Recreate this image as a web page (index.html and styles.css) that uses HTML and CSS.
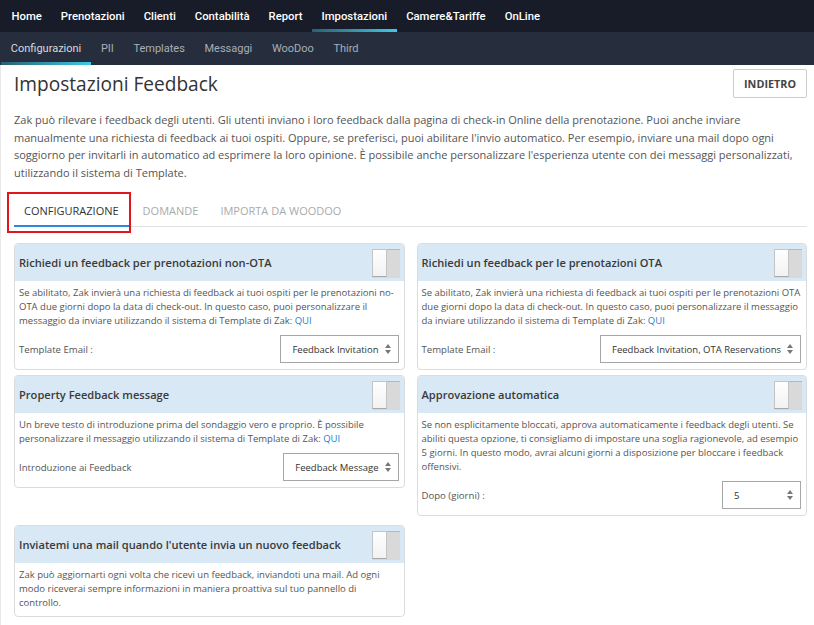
FILE: index.html
```html
<!DOCTYPE html>
<html lang="it">

<head>
  <meta charset="UTF-8" />
  <meta name="viewport" content="width=device-width, initial-scale=1.0" />
  <title>Impostazioni Feedback</title>

  <link rel="stylesheet" href="styles.css">

</head>

<body>

  <!-- Menu principale -->
  <nav class="topnav">
    <a class="topnav-item">Home</a>
    <a class="topnav-item">Prenotazioni</a>
    <a class="topnav-item">Clienti</a>
    <a class="topnav-item">Contabilità</a>
    <a class="topnav-item">Report</a>
    <a class="topnav-item active">Impostazioni</a>
    <a class="topnav-item">Camere&amp;Tariffe</a>
    <a class="topnav-item">OnLine</a>
  </nav>

  <!-- Sotto menu -->
  <nav class="subnav">
    <a class="subnav-item active">Configurazioni</a>
    <a class="subnav-item">PII</a>
    <a class="subnav-item">Templates</a>
    <a class="subnav-item">Messaggi</a>
    <a class="subnav-item">WooDoo</a>
    <a class="subnav-item">Third</a>
  </nav>

  <main class="page">

    <div class="page-header">
      <h1 class="page-title">Impostazioni Feedback</h1>
      <button class="btn-back">INDIETRO</button>
    </div>

    <p class="intro">Zak può rilevare i feedback degli utenti. Gli utenti inviano i loro feedback dalla pagina di check-in Online della prenotazione. Puoi anche inviare manualmente una richiesta di feedback ai tuoi ospiti. Oppure, se preferisci, puoi abilitare l'invio automatico. Per esempio, inviare una mail dopo ogni soggiorno per invitarli in automatico ad esprimere la loro opinione. È possibile anche personalizzare l'esperienza utente con dei messaggi personalizzati, utilizzando il sistema di Template.</p>

    <div class="tabs">
      <div class="tab active">CONFIGURAZIONE<span class="highlight"></span></div>
      <div class="tab">DOMANDE</div>
      <div class="tab">IMPORTA DA WOODOO</div>
    </div>

    <div class="cards">

      <div class="card">
        <div class="card-head">
          <span class="card-title">Richiedi un feedback per prenotazioni non-OTA</span>
          <span class="toggle"><span class="knob"></span></span>
        </div>
        <div class="card-body">
          <p>Se abilitato, Zak invierà una richiesta di feedback ai tuoi ospiti per le prenotazioni no-OTA due giorni dopo la data di check-out. In questo caso, puoi personalizzare il messaggio da inviare utilizzando il sistema di Template di Zak: <a class="link">QUI</a></p>
          <div class="field">
            <span class="field-label">Template Email :</span>
            <div class="select">
              <span>Feedback Invitation</span>
              <svg class="arrows" width="6" height="10" viewBox="0 0 6 10"><path d="M3 0L6 4H0Z M3 10L0 6H6Z" fill="#777"/></svg>
            </div>
          </div>
        </div>
      </div>

      <div class="card">
        <div class="card-head">
          <span class="card-title">Richiedi un feedback per le prenotazioni OTA</span>
          <span class="toggle"><span class="knob"></span></span>
        </div>
        <div class="card-body">
          <p>Se abilitato, Zak invierà una richiesta di feedback ai tuoi ospiti per le prenotazioni OTA due giorni dopo la data di check-out. In questo caso, puoi personalizzare il messaggio da inviare utilizzando il sistema di Template di Zak: <a class="link">QUI</a></p>
          <div class="field">
            <span class="field-label">Template Email :</span>
            <div class="select">
              <span>Feedback Invitation, OTA Reservations</span>
              <svg class="arrows" width="6" height="10" viewBox="0 0 6 10"><path d="M3 0L6 4H0Z M3 10L0 6H6Z" fill="#777"/></svg>
            </div>
          </div>
        </div>
      </div>

      <div class="card">
        <div class="card-head">
          <span class="card-title">Property Feedback message</span>
          <span class="toggle"><span class="knob"></span></span>
        </div>
        <div class="card-body">
          <p>Un breve testo di introduzione prima del sondaggio vero e proprio. È possibile personalizzare il messaggio utilizzando il sistema di Template di Zak: <a class="link">QUI</a></p>
          <div class="field">
            <span class="field-label">Introduzione ai Feedback</span>
            <div class="select">
              <span>Feedback Message</span>
              <svg class="arrows" width="6" height="10" viewBox="0 0 6 10"><path d="M3 0L6 4H0Z M3 10L0 6H6Z" fill="#777"/></svg>
            </div>
          </div>
        </div>
      </div>

      <div class="card">
        <div class="card-head">
          <span class="card-title">Approvazione automatica</span>
          <span class="toggle"><span class="knob"></span></span>
        </div>
        <div class="card-body">
          <p>Se non esplicitamente bloccati, approva automaticamente i feedback degli utenti. Se abiliti questa opzione, ti consigliamo di impostare una soglia ragionevole, ad esempio 5 giorni. In questo modo, avrai alcuni giorni a disposizione per bloccare i feedback offensivi.</p>
          <div class="field">
            <span class="field-label">Dopo (giorni) :</span>
            <div class="select select-small">
              <span>5</span>
              <svg class="arrows" width="6" height="10" viewBox="0 0 6 10"><path d="M3 0L6 4H0Z M3 10L0 6H6Z" fill="#777"/></svg>
            </div>
          </div>
        </div>
      </div>

      <div class="card card-last">
        <div class="card-head">
          <span class="card-title">Inviatemi una mail quando l'utente invia un nuovo feedback</span>
          <span class="toggle"><span class="knob"></span></span>
        </div>
        <div class="card-body">
          <p>Zak può aggiornarti ogni volta che ricevi un feedback, inviandoti una mail. Ad ogni modo riceverai sempre informazioni in maniera proattiva sul tuo pannello di controllo.</p>
        </div>
      </div>

    </div>

  </main>

</body>

</html>
```

FILE: styles.css
```css
body {
  margin: 0;
  background: #fff;
  font-family: "Open Sans", "Liberation Sans", sans-serif;
  color: #555;
}

/* menu in alto */
.topnav {
  display: flex;
  height: 32px;
  padding-left: 2px;
  background: #171c28;
  font-family: Roboto, "Liberation Sans", sans-serif;
}

.topnav-item {
  position: relative;
  display: flex;
  align-items: center;
  padding: 0 9.5px;
  color: #fff;
  font-size: 11.3px;
  font-weight: 500;
}

.topnav-item.active::after,
.subnav-item.active::after {
  content: "";
  position: absolute;
  left: 0;
  right: 0;
  bottom: 0;
  height: 3px;
  background: linear-gradient(to right, #2b5f73, #3dcbe2);
}

.subnav {
  display: flex;
  height: 33px;
  padding-left: 1px;
  background: #262e3d;
  font-family: Roboto, "Liberation Sans", sans-serif;
}

.subnav-item {
  position: relative;
  display: flex;
  align-items: center;
  padding: 0 9.8px;
  color: #a9aeb6;
  font-size: 11px;
}

.subnav-item.active {
  color: #d7dade;
}

/* contenuto */
.page {
  min-height: calc(100vh - 69px);
  padding: 4px 7px 0 13px;
  border-left: 1px solid #e8e8e8;
}

.page-header {
  display: flex;
  justify-content: space-between;
  align-items: center;
  height: 29px;
}

.page-title {
  margin: 0;
  font-size: 19.1px;
  font-weight: 400;
  color: #333;
}

.btn-back {
  height: 29px;
  padding: 0 10px;
  background: #fff;
  border: 1px solid #ccc;
  border-radius: 2px;
  font-family: "Open Sans", "Liberation Sans", sans-serif;
  font-size: 10.8px;
  font-weight: 700;
  color: #444;
}

.intro {
  margin: 13px 0 0;
  font-size: 11px;
  line-height: 17.6px;
}

.tabs {
  display: flex;
  gap: 2px;
  margin-top: 15px;
  border-bottom: 1px solid #e2e2e2;
}

.tab {
  position: relative;
  padding: 0 10px;
  height: 29px;
  line-height: 29px;
  font-size: 11px;
  color: #aaa;
}

.tab.active {
  color: #333;
  border-bottom: 2px solid #2b8ae0;
  margin-bottom: -1px;
  padding: 0 12px 0 10px;
}

.highlight {
  position: absolute;
  left: -7px;
  top: -4px;
  width: 120px;
  height: 37px;
  border: 2px solid #e3141b;
}

/* schede */
.cards {
  display: grid;
  grid-template-columns: 1fr 1fr;
  column-gap: 12px;
  row-gap: 5px;
  align-items: start;
  margin-top: 16px;
}

.card {
  border: 1px solid #dcdcdc;
  border-radius: 4px;
  overflow: hidden;
}

.card-last {
  margin-top: 4px;
}

.card-head {
  display: flex;
  justify-content: space-between;
  align-items: center;
  height: 37px;
  padding: 0 4px 0 4px;
  background: #d8e8f5;
}

.card-title {
  font-size: 11.1px;
  font-weight: 600;
  color: #3a3a3a;
}

.toggle {
  display: flex;
  width: 28px;
  height: 29px;
  margin-top: 2px;
  background: #d9d9d9;
  border-top: 1px solid #b8b8b8;
  box-sizing: border-box;
}

.knob {
  width: 15px;
  height: 28px;
  margin-top: -1px;
  background: linear-gradient(#ffffff, #f2f2f2);
  border: 1px solid #c4c4c4;
  border-bottom-color: #a8a8a8;
  box-sizing: border-box;
}

.card-body {
  padding: 5px 4px 6px 4px;
}

.card-body p {
  margin: 0;
  font-size: 9.5px;
  line-height: 14px;
}

.link {
  color: #1a7fd4;
}

.field {
  display: flex;
  justify-content: space-between;
  align-items: center;
  margin-top: 7px;
  padding-right: 1px;
}

.field-label {
  font-size: 9.6px;
}

.select {
  display: flex;
  align-items: center;
  height: 28px;
  padding: 0 7px 0 11px;
  border: 1px solid #a6a6a6;
  box-sizing: border-box;
  font-size: 9.5px;
  color: #333;
}

.select .arrows {
  margin-left: 6px;
}

.select-small {
  width: 79px;
  justify-content: space-between;
}
```
